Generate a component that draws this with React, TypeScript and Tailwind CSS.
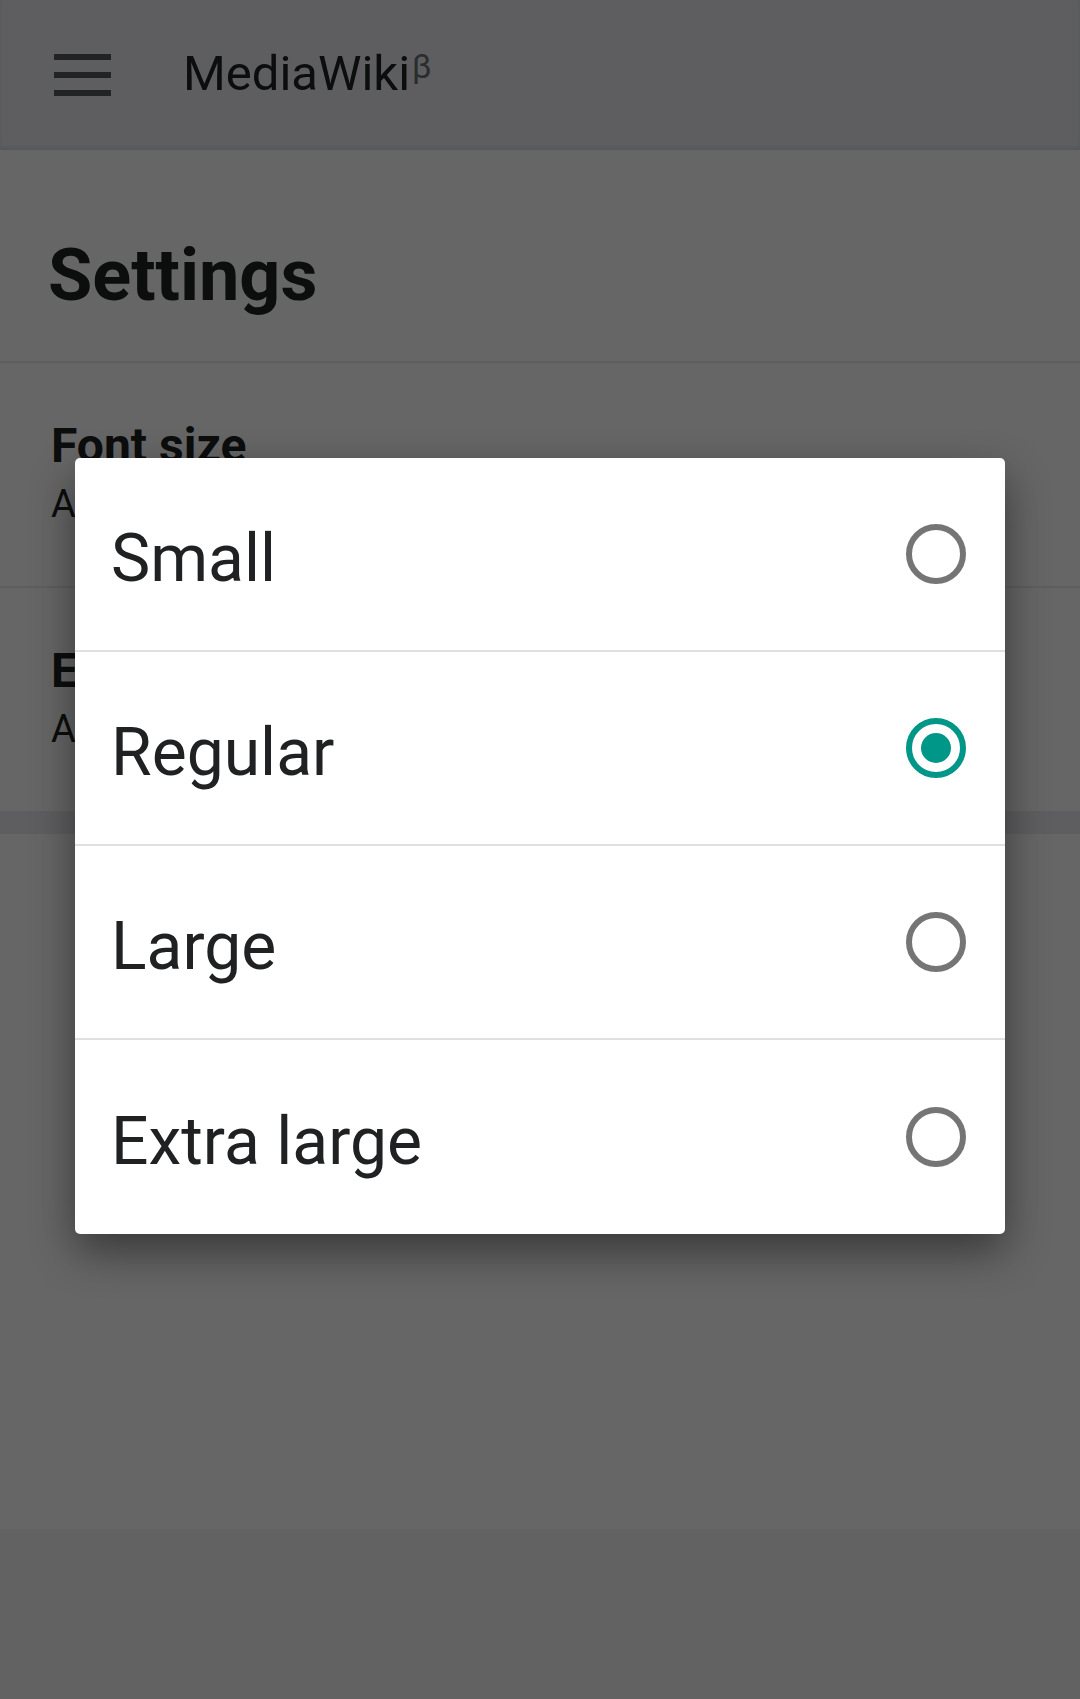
import { useState } from 'react';

const sizes = ['Small', 'Regular', 'Large', 'Extra large'];

function Radio({ checked }: { checked: boolean }) {
  return (
    <span
      className={`flex h-[60px] w-[60px] shrink-0 items-center justify-center rounded-full border-[6px] ${
        checked ? 'border-[#009688]' : 'border-[#757575]'
      }`}
    >
      {checked && <span className="h-[30px] w-[30px] rounded-full bg-[#009688]" />}
    </span>
  );
}

export default function App() {
  const [size, setSize] = useState('Regular');

  return (
    <div className="relative flex min-h-[1699px] flex-col bg-white font-['Roboto',sans-serif] text-[#202122]">
      {/* header */}
      <header className="flex h-[150px] items-center bg-[#eaecf0] shadow-[0_-3px_4px_rgba(0,0,0,0.08)_inset]">
        <div className="ml-[54px] flex w-[57px] flex-col gap-[12px]">
          <span className="h-[6px] bg-[#54595d]" />
          <span className="h-[6px] bg-[#54595d]" />
          <span className="h-[6px] bg-[#54595d]" />
        </div>
        <div className="ml-[72px] mb-[4px] flex items-start text-[49px] leading-none">
          MediaWiki
          <span className="ml-[2px] mt-[1px] text-[33px] leading-none text-[#6a6e73]">β</span>
        </div>
      </header>

      {/* settings */}
      <section className="border-b-2 border-[#eaecf0] px-[48px] pt-[90px] pb-[49px]">
        <h1 className="text-[72px] font-bold leading-none">Settings</h1>
      </section>

      <div className="border-b-2 border-[#eaecf0] px-[51px] pt-[59px] pb-[63px]">
        <div className="text-[48px] font-bold leading-none">Font size</div>
        <div className="mt-[15px] text-[38px] leading-none">Adjust the font size of articles</div>
      </div>
      <div className="px-[51px] pt-[59px] pb-[63px]">
        <div className="text-[48px] font-bold leading-none">Expand all sections</div>
        <div className="mt-[15px] text-[38px] leading-none">Always expand all sections on pages</div>
      </div>

      <div className="h-[23px] bg-[#eaecf0]" />
      <div className="h-[695px] bg-white" />
      <div className="flex-1 bg-[#f5f5f5]" />

      {/* dialog */}
      <div className="absolute inset-0 bg-black/60 px-[75px] pt-[458px]">
        <div className="overflow-hidden rounded-[5px] bg-white shadow-[0_18px_44px_rgba(0,0,0,0.45)]">
          {sizes.map((s, i) => (
            <button
              key={s}
              type="button"
              onClick={() => setSize(s)}
              className={`flex h-[194px] w-full items-center justify-between pl-[36px] pr-[39px] text-left ${
                i < sizes.length - 1 ? 'border-b-2 border-[#e0e0e0]' : ''
              }`}
            >
              <span className="mt-[9px] text-[66px] leading-none text-[#202122]">{s}</span>
              <Radio checked={size === s} />
            </button>
          ))}
        </div>
      </div>
    </div>
  );
}
